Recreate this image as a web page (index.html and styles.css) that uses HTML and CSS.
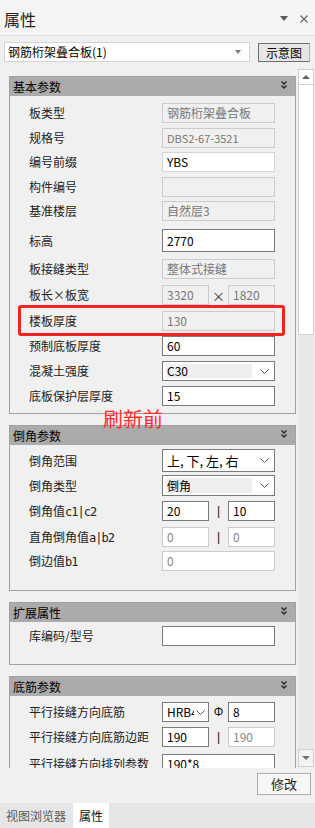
FILE: index.html
```html
<!DOCTYPE html>
<html lang="zh">
<head>
    <meta charset="UTF-8">
    <title>属性</title>
    <link rel="stylesheet" href="styles.css">
</head>
<body>
    <div class="panel">
        <div class="titlebar">
            <span class="title">属性</span>
            <span class="title-icons">
                <svg width="8" height="5" viewBox="0 0 8 5"><path d="M0 0H8L4 5Z" fill="#5a5a5a"/></svg>
                <svg width="8" height="8" viewBox="0 0 8 8"><path d="M0.5 0.5L7.5 7.5M7.5 0.5L0.5 7.5" stroke="#6a6a6a" stroke-width="1.3"/></svg>
            </span>
        </div>

        <div class="toolbar">
            <div class="top-combo">
                <span>钢筋桁架叠合板(1)</span>
                <svg width="6" height="4" viewBox="0 0 6 4"><path d="M0 0H6L3 4Z" fill="#7a7a7a"/></svg>
            </div>
            <button class="btn-diagram">示意图</button>
        </div>

        <div class="scroll">
            <div class="scroll-content">

                <!-- 基本参数 -->
                <div class="group">
                    <div class="group-head">
                        <span>基本参数</span>
                        <svg class="fold" width="6" height="8" viewBox="0 0 6 8"><path d="M0.5 0.5L3 3L5.5 0.5M0.5 4.5L3 7L5.5 4.5" stroke="#222" stroke-width="1.3" fill="none"/></svg>
                    </div>
                    <div class="group-body basic">
                        <div class="row"><span class="label">板类型</span><div class="field ro">钢筋桁架叠合板</div></div>
                        <div class="row sp45"><span class="label">规格号</span><div class="field ro small">DBS2-67-3521</div></div>
                        <div class="row sp45"><span class="label">编号前缀</span><div class="field lite">YBS</div></div>
                        <div class="row sp45"><span class="label">构件编号</span><div class="field ro"></div></div>
                        <div class="row sp45"><span class="label">基准楼层</span><div class="field ro">自然层3</div></div>
                        <div class="row tall sp8"><span class="label">标高</span><div class="field">2770</div></div>
                        <div class="row sp7"><span class="label">板接缝类型</span><div class="field ro">整体式接缝</div></div>
                        <div class="row sp6"><span class="label">板长×板宽</span>
                            <div class="field ro half">3320</div><span class="sep times">×</span><div class="field ro half">1820</div>
                        </div>
                        <div class="row sp6 marked"><span class="label">楼板厚度</span><div class="field ro">130</div>
                            <div class="mark"></div>
                        </div>
                        <div class="row"><span class="label">预制底板厚度</span><div class="field">60</div></div>
                        <div class="row"><span class="label">混凝土强度</span>
                            <div class="field select"><span class="sel-text hl">C30</span><svg width="9" height="5" viewBox="0 0 9 5"><path d="M0.5 0.5L4.5 4.5L8.5 0.5" stroke="#555" fill="none"/></svg></div>
                        </div>
                        <div class="row"><span class="label">底板保护层厚度</span><div class="field">15</div></div>
                    </div>
                </div>

                <!-- 倒角参数 -->
                <div class="group chamfer">
                    <span class="note">刷新前</span>
                    <div class="group-head">
                        <span>倒角参数</span>
                        <svg class="fold" width="6" height="8" viewBox="0 0 6 8"><path d="M0.5 0.5L3 3L5.5 0.5M0.5 4.5L3 7L5.5 4.5" stroke="#222" stroke-width="1.3" fill="none"/></svg>
                    </div>
                    <div class="group-body chamfer-body">
                        <div class="row h23"><span class="label">倒角范围</span>
                            <div class="field select"><span class="sel-text big">上, 下, 左, 右</span><svg width="9" height="5" viewBox="0 0 9 5"><path d="M0.5 0.5L4.5 4.5L8.5 0.5" stroke="#555" fill="none"/></svg></div>
                        </div>
                        <div class="row h21 sp3"><span class="label">倒角类型</span>
                            <div class="field select"><span class="sel-text hl">倒角</span><svg width="9" height="5" viewBox="0 0 9 5"><path d="M0.5 0.5L4.5 4.5L8.5 0.5" stroke="#555" fill="none"/></svg></div>
                        </div>
                        <div class="row"><span class="label">倒角值<span class="mono">c1|c2</span></span>
                            <div class="field half">20</div><span class="sep">|</span><div class="field half">10</div>
                        </div>
                        <div class="row sp6"><span class="label">直角倒角值<span class="mono">a|b2</span></span>
                            <div class="field off half">0</div><span class="sep">|</span><div class="field off half">0</div>
                        </div>
                        <div class="row sp4"><span class="label">倒边值<span class="mono">b1</span></span><div class="field off">0</div></div>
                    </div>
                </div>

                <!-- 扩展属性 -->
                <div class="group">
                    <div class="group-head">
                        <span>扩展属性</span>
                        <svg class="fold" width="6" height="8" viewBox="0 0 6 8"><path d="M0.5 0.5L3 3L5.5 0.5M0.5 4.5L3 7L5.5 4.5" stroke="#222" stroke-width="1.3" fill="none"/></svg>
                    </div>
                    <div class="group-body ext-body">
                        <div class="row"><span class="label">库编码/型号</span><div class="field"></div></div>
                    </div>
                </div>

                <!-- 底筋参数 -->
                <div class="group">
                    <div class="group-head">
                        <span>底筋参数</span>
                        <svg class="fold" width="6" height="8" viewBox="0 0 6 8"><path d="M0.5 0.5L3 3L5.5 0.5M0.5 4.5L3 7L5.5 4.5" stroke="#222" stroke-width="1.3" fill="none"/></svg>
                    </div>
                    <div class="group-body rebar-body">
                        <div class="row"><span class="label">平行接缝方向底筋</span>
                            <div class="field select half tight"><span class="sel-text clip">HRB4</span><svg width="9" height="5" viewBox="0 0 9 5"><path d="M0.5 0.5L4.5 4.5L8.5 0.5" stroke="#555" fill="none"/></svg></div>
                            <span class="sep">Φ</span><div class="field half">8</div>
                        </div>
                        <div class="row"><span class="label">平行接缝方向底筋边距</span>
                            <div class="field half">190</div><span class="sep">|</span><div class="field off half">190</div>
                        </div>
                        <div class="row sp7"><span class="label">平行接缝方向排列参数</span><div class="field">190*8</div></div>
                    </div>
                </div>

            </div>
            <div class="scrollbar">
                <div class="sb-btn up"><svg width="8" height="4" viewBox="0 0 8 4"><path d="M0 4H8L4 0Z" fill="#606060"/></svg></div>
                <div class="sb-thumb"></div>
                <div class="sb-track"></div>
                <div class="sb-btn down"><svg width="8" height="4" viewBox="0 0 8 4"><path d="M0 0H8L4 4Z" fill="#707070"/></svg></div>
            </div>
        </div>

        <div class="footer">
            <button class="btn-modify">修改</button>
        </div>

        <div class="tabs">
            <span class="tab">视图浏览器</span>
            <span class="tab active">属性</span>
        </div>
    </div>
</body>
</html>
```

FILE: styles.css
```css
* {
    box-sizing: border-box;
}

body {
    margin: 0;
    background-color: #f0f0f0;
    font-family: "Noto Sans CJK SC", "Liberation Sans", sans-serif;
    font-size: 12px;
    color: #000;
}

.panel {
    width: 315px;
    height: 828px;
    display: flex;
    flex-direction: column;
    overflow: hidden;
}

.titlebar {
    height: 36px;
    display: flex;
    align-items: center;
    justify-content: space-between;
    padding: 2px 7px 0 4px;
    background-color: #f4f4f4;
    border-bottom: 1px solid #e2e2e2;
}

    .titlebar .title {
        font-size: 16px;
        line-height: 20px;
        color: #222;
    }

    .titlebar .title-icons {
        display: flex;
        align-items: center;
        gap: 12px;
    }

.toolbar {
    height: 32px;
    display: flex;
    align-items: flex-start;
    padding: 6px 0 0 4px;
}

.top-combo {
    width: 246px;
    height: 20px;
    display: flex;
    align-items: center;
    justify-content: space-between;
    padding: 0 8px 0 3px;
    background-color: #fff;
    border: 1px solid #d4d4d4;
    line-height: 18px;
}

.btn-diagram {
    margin: 1px 0 0 8px;
    width: 52px;
    height: 19px;
    padding: 0;
    font-family: inherit;
    font-size: 12px;
    line-height: 16px;
    background-color: #e6e6e6;
    border: 1px solid #6e6e6e;
    border-right-color: #b5b5b5;
    color: #000;
}

.scroll {
    height: 700px;
    display: flex;
}

.scroll-content {
    width: 297px;
    overflow: hidden;
    padding: 8px 0 0 9px;
}

.group {
    position: relative;
    width: 287px;
    border: 1px solid #a0a0a0;
    margin-bottom: 11px;
}

    .group .group-head {
        height: 19px;
        display: flex;
        justify-content: space-between;
        padding: 0 8px 0 3px;
        background-color: #ababab;
        line-height: 19px;
    }

    .group .fold {
        margin-top: 4px;
    }

.group-body {
    padding: 0 20px 0 19px;
}

    .group-body.basic {
        padding-top: 7px;
        padding-bottom: 7px;
    }

    .group-body.chamfer-body {
        padding-top: 4px;
        padding-bottom: 19px;
    }

    .group-body.ext-body {
        padding-top: 4px;
        padding-bottom: 18px;
    }

    .group-body.rebar-body {
        padding-top: 6px;
    }

.row {
    position: relative;
    height: 20px;
    display: flex;
    align-items: center;
    margin-top: 5px;
}

    .row:first-child {
        margin-top: 0;
    }

    .row.tall {
        height: 23px;
    }

    .row.h23 {
        height: 23px;
    }

    .row.h21 {
        height: 21px;
    }

    .row.sp3 { margin-top: 3px; }
    .row.sp4 { margin-top: 4px; }
    .row.sp45 { margin-top: 4.5px; }
    .row.sp6 { margin-top: 6px; }
    .row.sp7 { margin-top: 7px; }
    .row.sp8 { margin-top: 8px; }

    .row .label {
        width: 133px;
        flex-shrink: 0;
        color: #222;
        line-height: 20px;
        white-space: nowrap;
    }

    .row .mono {
        font-family: "DejaVu Sans Mono", monospace;
        font-size: 12px;
        letter-spacing: -1px;
    }

.field {
    width: 113px;
    height: 100%;
    display: flex;
    align-items: center;
    padding-left: 4px;
    background-color: #fff;
    border: 1px solid #7a7a7a;
    line-height: 16px;
    white-space: nowrap;
    overflow: hidden;
}

    .field.lite {
        border-color: #d4d4d4;
    }

    .field.ro {
        background-color: #f0f0f0;
        border-color: #cbcbcb;
        color: #777;
    }

    .field.off {
        border-color: #cbcbcb;
        color: #888;
    }

    .field.small {
        font-size: 11px;
    }

    .field.half {
        width: 47px;
    }

    .field.select {
        justify-content: space-between;
        padding: 2px 5px 2px 3px;
    }

        .field.select.tight {
            padding-right: 3px;
        }

    .field .sel-text {
        height: 100%;
        display: flex;
        align-items: center;
        flex: 1;
        padding-left: 1px;
    }

        .field .sel-text.big {
            font-size: 13px;
        }

        .field .sel-text.hl {
            background-color: #efefef;
            margin-right: 8px;
        }

        .field .sel-text.clip {
            overflow: hidden;
            margin-right: 2px;
        }

.sep {
    width: 19px;
    text-align: center;
    font-family: "Liberation Sans", sans-serif;
    color: #111;
}

    .sep.times {
        font-family: "Noto Sans CJK SC", sans-serif;
        font-size: 13px;
        color: #333;
    }

.mark {
    position: absolute;
    left: -11px;
    right: -10px;
    top: -6px;
    bottom: -5px;
    border: 3px solid #f52222;
    border-radius: 3px;
}

.note {
    position: absolute;
    left: 93px;
    top: -17px;
    font-size: 20px;
    line-height: 20px;
    color: #ff2b2b;
}

.scrollbar {
    width: 16px;
    margin: 1px 1px 1px 1px;
    display: flex;
    flex-direction: column;
}

    .scrollbar .sb-btn {
        display: flex;
        align-items: center;
        justify-content: center;
        border: 1px solid #d0d0d0;
    }

    .scrollbar .up {
        height: 16px;
        background-color: #fff;
    }

    .scrollbar .down {
        height: 18px;
        background-color: #f3f3f3;
    }

    .scrollbar .sb-thumb {
        height: 250px;
        background-color: #fff;
        border: 1px solid #d0d0d0;
        border-top: none;
    }

    .scrollbar .sb-track {
        flex: 1;
        background-color: #e9e9e9;
    }

.footer {
    height: 35px;
    display: flex;
    justify-content: flex-end;
    padding: 5px 4px 0 0;
}

.btn-modify {
    width: 54px;
    height: 22px;
    padding: 0;
    font-family: inherit;
    font-size: 13px;
    line-height: 18px;
    background-color: #f7f7f7;
    border: 1px solid #adadad;
    color: #222;
}

.tabs {
    height: 25px;
    display: flex;
    background-color: #e6e6e6;
    padding-left: 6px;
}

    .tabs .tab {
        line-height: 25px;
        color: #5a5a5a;
        padding-right: 7px;
    }

    .tabs .tab.active {
        background-color: #fff;
        color: #111;
        padding: 0 6px;
    }
```
